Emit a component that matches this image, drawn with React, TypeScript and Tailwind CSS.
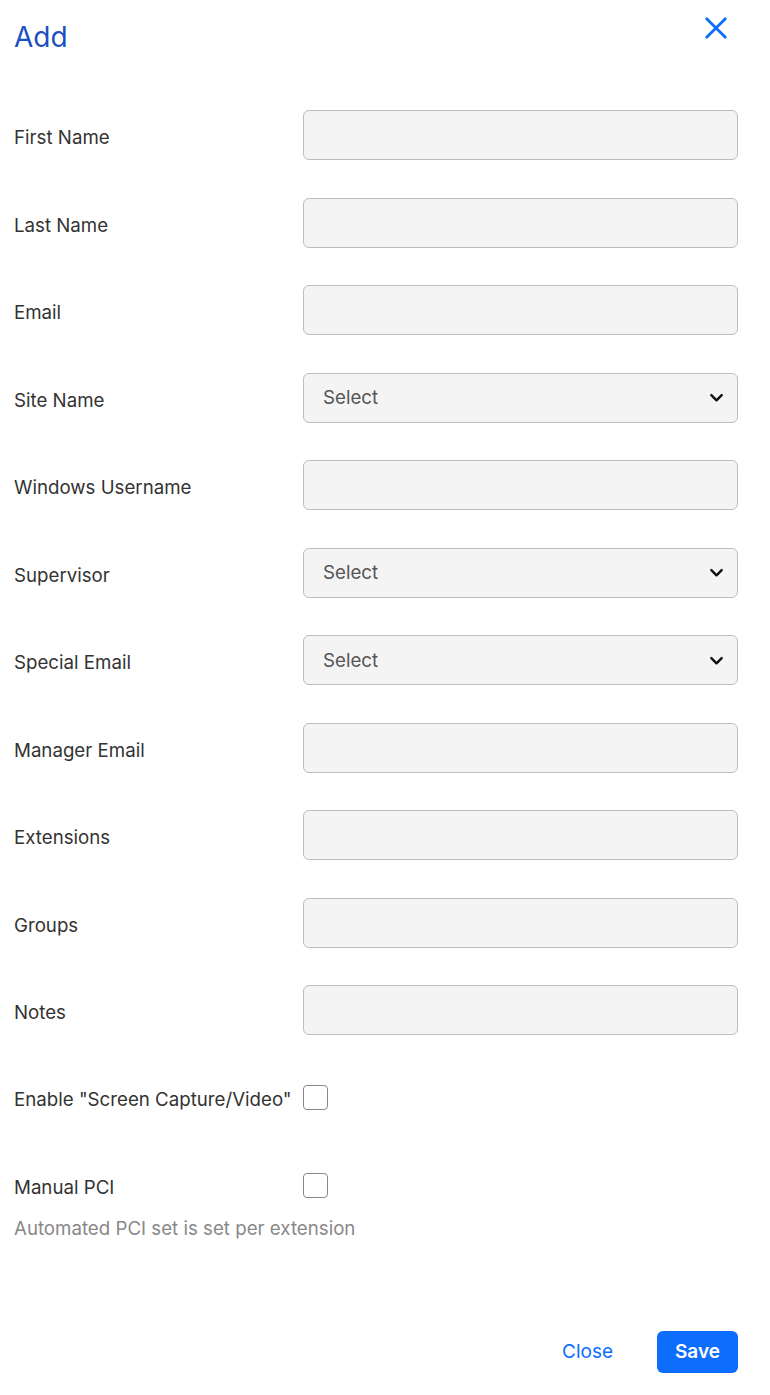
import React from "react";

const fields: { label: string; type: "input" | "select" }[] = [
  { label: "First Name", type: "input" },
  { label: "Last Name", type: "input" },
  { label: "Email", type: "input" },
  { label: "Site Name", type: "select" },
  { label: "Windows Username", type: "input" },
  { label: "Supervisor", type: "select" },
  { label: "Special Email", type: "select" },
  { label: "Manager Email", type: "input" },
  { label: "Extensions", type: "input" },
  { label: "Groups", type: "input" },
  { label: "Notes", type: "input" },
];

function Chevron() {
  return (
    <svg width="15" height="15" viewBox="0 0 16 16" fill="none">
      <path d="M2.5 5.5L8 11l5.5-5.5" stroke="#111" strokeWidth="2.6" strokeLinecap="round" strokeLinejoin="round" />
    </svg>
  );
}

export default function App() {
  return (
    <div className="w-[770px] h-[1395px] bg-white pl-[14px] pr-[32px] font-['Inter','Noto_Sans',sans-serif] text-[#333]">
      <div className="flex items-start justify-between pt-[20px] h-[110px]">
        <h1 className="text-[28px] leading-[34px] font-normal text-[#1d4fbf]">Add</h1>
        <button className="mt-[-6px] mr-[8px] p-0">
          <svg width="28" height="28" viewBox="0 0 24 24" fill="none">
            <path d="M4 4L20 20M20 4L4 20" stroke="#0d6efd" strokeWidth="2.4" strokeLinecap="round" />
          </svg>
        </button>
      </div>
      <div className="flex flex-col gap-[37.5px]">
        {fields.map((f) => (
          <div key={f.label} className="grid grid-cols-[289px_1fr] items-center h-[50px]">
            <label className="text-[18.7px] pt-[7px]">{f.label}</label>
            {f.type === "input" ? (
              <div className="h-[50px] rounded-[6px] border border-[#bdbdbd] bg-[#f4f4f4]" />
            ) : (
              <div className="h-[50px] rounded-[6px] border border-[#bdbdbd] bg-[#f4f4f4] flex items-center justify-between pl-[19px] pr-[13px]">
                <span className="text-[18.7px] text-[#555] pt-[2px]">Select</span>
                <Chevron />
              </div>
            )}
          </div>
        ))}
        <div className="grid grid-cols-[289px_1fr] items-center h-[50px]">
          <label className="text-[18.7px] pt-[6px] whitespace-nowrap">Enable "Screen Capture/Video"</label>
          <div className="w-[25px] h-[25px] rounded-[4px] border border-[#888] bg-white" />
        </div>
        <div className="flex flex-col">
          <div className="grid grid-cols-[289px_1fr] items-center h-[50px]">
            <label className="text-[18.7px] pt-[6px]">Manual PCI</label>
            <div className="w-[25px] h-[25px] rounded-[4px] border border-[#888] bg-white" />
          </div>
          <p className="text-[18.7px] text-[#888] mt-[5px]">Automated PCI set is set per extension</p>
        </div>
      </div>
      <div className="flex justify-end items-center gap-[24px] mt-[88px]">
        <button className="text-[19px] text-[#0d6efd] px-[20px] h-[42px]">Close</button>
        <button className="text-[19px] font-semibold text-white bg-[#0d6efd] rounded-[6px] h-[42px] w-[81px]">Save</button>
      </div>
    </div>
  );
}
